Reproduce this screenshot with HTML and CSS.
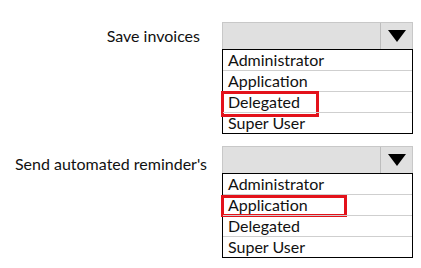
FILE: index.html
```html
<!DOCTYPE html>
<html>
<head>
  <title>Permission types</title>
  <link rel="stylesheet" href="styles.css">
</head>
<body>
  <div class="form">
    <div class="field">
      <div class="label label-short">Save invoices</div>
      <div class="picker">
        <div class="combo">
          <span class="combo-value"></span>
          <span class="combo-arrow">
            <svg width="18" height="12" viewBox="0 0 18 12"><path d="M0 0 H18 L9 12 Z" fill="#000"/></svg>
          </span>
        </div>
        <ul class="options">
          <li>Administrator</li>
          <li>Application</li>
          <li>Delegated<span class="mark mark-tall"></span></li>
          <li>Super User</li>
        </ul>
      </div>
    </div>

    <div class="field">
      <div class="label label-long">Send automated reminder's</div>
      <div class="picker">
        <div class="combo">
          <span class="combo-value"></span>
          <span class="combo-arrow">
            <svg width="18" height="12" viewBox="0 0 18 12"><path d="M0 0 H18 L9 12 Z" fill="#000"/></svg>
          </span>
        </div>
        <ul class="options">
          <li>Administrator</li>
          <li>Application<span class="mark mark-wide"></span></li>
          <li>Delegated</li>
          <li>Super User</li>
        </ul>
      </div>
    </div>
  </div>
</body>
</html>
```

FILE: styles.css
```css
body {
  margin: 0;
  background: #fff;
  font-family: Lato, "Open Sans", sans-serif;
  color: #111;
}
.form {
  display: flex;
  flex-direction: column;
  gap: 12px;
  padding-top: 22px;
}
.field {
  display: flex;
  align-items: flex-start;
}
.label {
  width: 222px;
  flex-shrink: 0;
  text-align: right;
  font-size: 16px;
  line-height: 27px;
  box-sizing: border-box;
}
.label-short {
  padding-right: 22px;
}
.label-long {
  padding-right: 15px;
  padding-top: 4px;
}
.picker {
  width: 191px;
}
.combo {
  display: flex;
  height: 27px;
  background: #e0e0e0;
  border: 1px solid #c8c8c8;
  border-bottom: none;
  box-sizing: border-box;
}
.combo-value {
  flex: 1;
}
.combo-arrow {
  width: 31px;
  border-left: 1px solid #bdbdbd;
  display: flex;
  align-items: center;
  justify-content: center;
}
.options {
  list-style: none;
  margin: 0;
  padding: 0;
  border: 1px solid #000;
  background: #fff;
}
.options li {
  position: relative;
  height: 20px;
  line-height: 20px;
  padding-left: 5px;
  font-size: 16px;
  border-top: 1px solid #cfcfcf;
}
.options li:first-child {
  border-top: none;
}
.mark {
  position: absolute;
  left: -2px;
  top: -1px;
  border: 3px solid #e3121b;
  box-sizing: border-box;
}
.mark-tall {
  width: 98px;
  height: 26px;
}
.mark-wide {
  top: 0;
  width: 126px;
  height: 22px;
}
```
